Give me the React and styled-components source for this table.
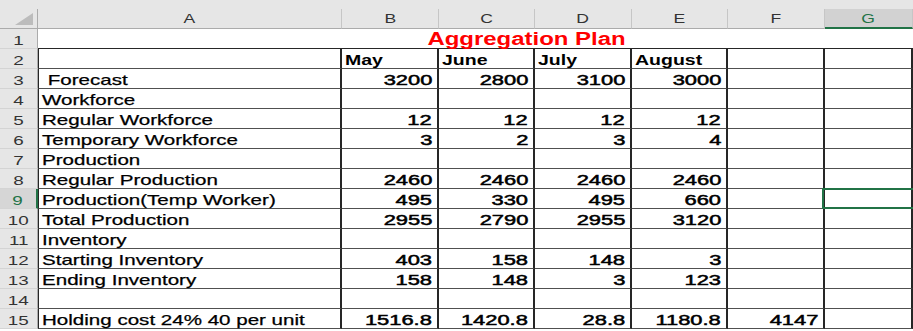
import React from "react";
import styled, { createGlobalStyle, css } from "styled-components";

const Global = createGlobalStyle`
  html, body { margin: 0; padding: 0; background: #ffffff; }
  body { font-family: "Liberation Sans", Arial, sans-serif; }
`;

const GREEN = "#217346";
const DARK = "#262626";
const LINE = "#505050";

const Page = styled.div`
  width: 913px;
  height: 331px;
  overflow: hidden;
  background: #ffffff;
`;

const TopStrip = styled.div`
  height: 9px;
  background: #e6e6e6;
`;

const Sheet = styled.div`
  display: grid;
  grid-template-columns: 38px 304px 97px 96px 97px 96px 97px 1fr;
  grid-auto-rows: 20px;
`;

const Corner = styled.div`
  box-sizing: border-box;
  background: #e6e6e6;
  border-right: 1px solid #ababab;
  border-bottom: 1px solid #ababab;
  display: flex;
  justify-content: flex-end;
  align-items: flex-end;
  padding: 0 4px 3px 0;
`;

const Triangle = styled.div`
  width: 0;
  height: 0;
  border-left: 18px solid transparent;
  border-bottom: 12px solid #bcbcbc;
`;

const ColHeader = styled.div`
  box-sizing: border-box;
  background: ${(p) => (p.$selected ? "#d2d2d2" : "#e6e6e6")};
  border-right: 1px solid #c6c6c6;
  border-bottom: ${(p) => (p.$selected ? `2px solid ${GREEN}` : "1px solid #ababab")};
  display: flex;
  align-items: center;
  justify-content: center;
  font-size: 13px;
  color: ${(p) => (p.$selected ? GREEN : "#333333")};
`;

const RowHeader = styled.div`
  box-sizing: border-box;
  background: ${(p) => (p.$selected ? "#d6d6d6" : "#e6e6e6")};
  border-right: ${(p) => (p.$selected ? `2px solid ${GREEN}` : "1px solid #ababab")};
  border-bottom: 1px solid #d4d4d4;
  display: flex;
  align-items: flex-end;
  justify-content: center;
  font-size: 13px;
  color: ${(p) => (p.$selected ? GREEN : "#333333")};
`;

const TitleCell = styled.div`
  grid-column: 2 / -1;
  box-sizing: border-box;
  border-bottom: 1px solid ${DARK};
  display: flex;
  align-items: flex-end;
  justify-content: center;
  padding-left: 103px;
`;

const Cell = styled.div`
  box-sizing: border-box;
  position: relative;
  background: #ffffff;
  border-right: 2px solid ${DARK};
  border-bottom: 1px solid ${LINE};
  ${(p) => p.$first && css`border-left: 1px solid ${DARK};`}
  display: flex;
  align-items: flex-end;
  justify-content: ${(p) => (p.$right ? "flex-end" : "flex-start")};
  padding: ${(p) => (p.$right ? "0 5px 0 0" : "0 0 0 3px")};
  font-size: 15px;
  color: #000000;
  white-space: pre;

  ${(p) =>
    p.$active &&
    css`
      &::after {
        content: "";
        position: absolute;
        left: -3px;
        right: -6px;
        top: -1px;
        bottom: -1px;
        border: 2px solid ${GREEN};
        pointer-events: none;
      }
    `}
`;

const Txt = styled.span`
  display: inline-block;
  white-space: pre;
  transform: scaleX(${(p) => p.$scale});
  transform-origin: ${(p) => p.$origin || "left"} bottom;
  font-weight: ${(p) => (p.$bold ? 700 : 400)};
  -webkit-text-stroke: ${(p) => p.$stroke || 0}px currentColor;
`;

const Title = styled(Txt)`
  font-size: 18px;
  line-height: 18px;
  font-weight: 700;
  color: #ff0000;
`;

const cols = ["A", "B", "C", "D", "E", "F", "G"];

const rows = [
  { n: 3, label: " Forecast", vals: [3200, 2800, 3100, 3000] },
  { n: 4, label: "Workforce" },
  { n: 5, label: "Regular Workforce", vals: [12, 12, 12, 12] },
  { n: 6, label: "Temporary Workforce", vals: [3, 2, 3, 4] },
  { n: 7, label: "Production" },
  { n: 8, label: "Regular Production", vals: [2460, 2460, 2460, 2460] },
  { n: 9, label: "Production(Temp Worker)", vals: [495, 330, 495, 660] },
  { n: 10, label: "Total Production", vals: [2955, 2790, 2955, 3120] },
  { n: 11, label: "Inventory" },
  { n: 12, label: "Starting Inventory", vals: [403, 158, 148, 3] },
  { n: 13, label: "Ending Inventory", vals: [158, 148, 3, 123] },
  { n: 14, label: "" },
  { n: 15, label: "Holding cost 24% 40 per unit", vals: [1516.8, 1420.8, 28.8, 1180.8, 4147] },
];

const months = ["May", "June", "July", "August"];

export default function App() {
  return (
    <Page>
      <Global />
      <TopStrip />
      <Sheet>
        <Corner>
          <Triangle />
        </Corner>
        {cols.map((c) => (
          <ColHeader key={c} $selected={c === "G"}>
            <Txt $scale={1.35} $origin="center">{c}</Txt>
          </ColHeader>
        ))}

        <RowHeader>
          <Txt $scale={1.45} $origin="center">1</Txt>
        </RowHeader>
        <TitleCell>
          <Title $scale={1.33} $origin="center">Aggregation Plan</Title>
        </TitleCell>

        <RowHeader>
          <Txt $scale={1.45} $origin="center">2</Txt>
        </RowHeader>
        <Cell $first />
        {months.map((m) => (
          <Cell key={m}>
            <Txt $scale={1.3} $bold>{m}</Txt>
          </Cell>
        ))}
        <Cell />
        <Cell />

        {rows.map((r) => (
          <React.Fragment key={r.n}>
            <RowHeader $selected={r.n === 9}>
              <Txt $scale={1.45} $origin="center">{String(r.n)}</Txt>
            </RowHeader>
            <Cell $first>
              <Txt $scale={1.37} $stroke={0.25}>{r.label}</Txt>
            </Cell>
            {[0, 1, 2, 3, 4].map((i) => {
              const v = r.vals ? r.vals[i] : undefined;
              return (
                <Cell key={i} $right>
                  {v !== undefined && (
                    <Txt $scale={1.46} $origin="right" $stroke={0.5}>
                      {String(v)}
                    </Txt>
                  )}
                </Cell>
              );
            })}
            <Cell $active={r.n === 9} />
          </React.Fragment>
        ))}
      </Sheet>
    </Page>
  );
}
